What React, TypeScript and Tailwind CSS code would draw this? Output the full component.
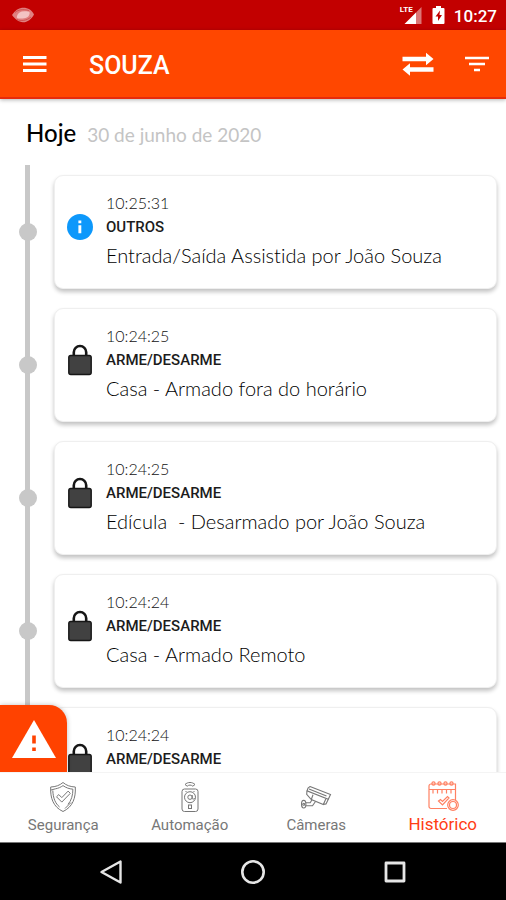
type EventItem = {
  time: string;
  category: string;
  message?: string;
  kind: "info" | "lock";
};

const events: EventItem[] = [
  { time: "10:25:31", category: "OUTROS", message: "Entrada/Saída Assistida por João Souza", kind: "info" },
  { time: "10:24:25", category: "ARME/DESARME", message: "Casa - Armado fora do horário", kind: "lock" },
  { time: "10:24:25", category: "ARME/DESARME", message: "Edícula  - Desarmado por João Souza", kind: "lock" },
  { time: "10:24:24", category: "ARME/DESARME", message: "Casa - Armado Remoto", kind: "lock" },
  { time: "10:24:24", category: "ARME/DESARME", kind: "lock" },
];

const InfoIcon = () => (
  <svg viewBox="0 0 26 26" className="size-[26px]" aria-hidden="true">
    <circle cx="13" cy="13" r="13" fill="#0d98fb" />
    <path d="M11.4 6.6h2.900v2.700h-2.900zM11.4 11.200h2.900v8h-2.900z" fill="#fff" />
  </svg>
);

const LockIcon = () => (
  <svg viewBox="0 0 26 32" className="h-8 w-[26px]" aria-hidden="true">
    <path d="M6.8 12V8.2a6.2 6.2 0 0 1 12.4 0V12" fill="none" stroke="#161616" strokeWidth="2.6" />
    <rect x="1.8" y="11.5" width="22.4" height="19" rx="2" fill="#414141" stroke="#161616" strokeWidth="1.4" />
  </svg>
);

const ShieldIcon = () => (
  <svg viewBox="0 0 28 32" className="h-8 w-7" fill="none" stroke="currentColor" strokeWidth="1" aria-hidden="true">
    <path d="M14 1.500c3.500 3 7.500 4.300 12.300 4.500.6 11-2.600 20-12.300 24.500C4.300 26 1.100 17 1.700 6 6.500 5.800 10.500 4.500 14 1.500z" />
    <path d="M3.800 9.500c.3 7.500 2.500 13 6.800 16.500M2 9l4.500-1.200c2.800-.5 5.300-1.600 7.500-3.200 2.900 2.100 6.200 3.300 9.900 3.600 0 6-1.600 11.500-4.900 15.200M16 27.500l6-6" />
    <path d="M7.500 15.800l2.300-2.200 3 3 6.300-6.500 2.200 2.200-8.500 8.800z" />
  </svg>
);

const RemoteIcon = () => (
  <svg viewBox="0 0 20 32" className="h-8 w-5" fill="none" stroke="currentColor" strokeWidth="1" aria-hidden="true">
    <path d="M5 3.500C7.800.8 12.200.8 15 3.500M5 3.500l2.200 1.700c1.700-1.500 3.900-1.500 5.600 0L15 3.500" />
    <rect x="2" y="8" width="16" height="22.500" rx="2.500" />
    <circle cx="10" cy="16.200" r="5.500" />
    <circle cx="10" cy="16.200" r="2.200" />
    <path d="M12.200 14v3.500c.8 1 2 .6 2.600-.5M5.500 10.500h1M13.500 10.500h1" />
    <rect x="8.500" y="24" width="3" height="3.500" />
  </svg>
);

const CameraIcon = () => (
  <svg viewBox="0 0 32 32" className="size-8" fill="none" stroke="currentColor" strokeWidth="1.1" aria-hidden="true">
    <path d="M10 5.500l20.500 8-2.200 4.700L7 9.800c.3-2 1.200-3.600 3-4.300z" />
    <path d="M7 9.800l-.3 3.500 4.600 5.200 12 5 2.500-5.500M23.300 23.500l2.700-.6 2.300-4.700M9 8l17.500 7M11.300 18.500l1.700-4.700" />
    <path d="M15.500 20.500l-3 4.200H5.500M12 18.800l-1.800 3H5.500" />
    <ellipse cx="3.700" cy="23.200" rx="2.200" ry="3.800" />
    <circle cx="3.700" cy="23.200" r="1" />
  </svg>
);

const CalendarIcon = () => (
  <svg viewBox="0 0 32 32" className="size-8 text-[#ff8163]" fill="none" stroke="currentColor" strokeWidth="1.200" aria-hidden="true">
    <path d="M20 28.500H4a2 2 0 0 1-2-2V6a2 2 0 0 1 2-2h24.500v16M2 9.500h26.500" />
    <circle cx="6.500" cy="3.500" r="1.600" />
    <circle cx="12.500" cy="3.500" r="1.600" />
    <circle cx="18.500" cy="3.500" r="1.600" />
    <circle cx="24.500" cy="3.500" r="1.600" />
    <path d="M6 10v3.500M10.500 10v3.500M15 10v3.500M19.500 10v3.500M24 10v3.500" />
    <path d="M11.500 21l2-1.500 2 2 5-5 1.500 1.500-6.500 7z" />
    <circle cx="26" cy="25" r="5.300" />
    <circle cx="26" cy="25" r="3.500" />
  </svg>
);

const tabs = [
  { label: "Segurança", Icon: ShieldIcon, active: false },
  { label: "Automação", Icon: RemoteIcon, active: false },
  { label: "Câmeras", Icon: CameraIcon, active: false },
  { label: "Histórico", Icon: CalendarIcon, active: true },
];

const StatusBar = () => (
  <div className="flex h-[30px] shrink-0 items-center bg-[#c20000] pr-[9px] pl-3">
    <svg viewBox="0 0 22 16" className="h-4 w-[22px]" aria-hidden="true">
      <path d="M0 8C3 3.500 6.500 1 10 .7 15.500.2 20 3 22 7.500 19.500 12.500 15 15.500 11 15.300 6.500 15 3 12 0 8z" fill="#e08080" />
      <path d="M5 9c1-4 5-5.500 11-4.500 1.500 0 2 1 1.500 2.500-1 4-5 5-11 4.500C5 11.500 4.500 10.500 5 9z" fill="#f3c4c4" />
      <path d="M3 5.500C6 2.800 11 1.800 17 3.500M5 12.500c4 1.800 9 1.500 14-2.500" fill="none" stroke="#c94040" strokeWidth=".7" />
    </svg>
    <div className="ml-auto flex items-center">
      <div className="relative">
        <svg viewBox="0 0 22 20" className="h-5 w-[22px]" aria-hidden="true">
          <path d="M21.500 2v17H16V7.500z" fill="#dc7676" />
          <path d="M16 7.500V19H4.500z" fill="#fff" />
        </svg>
        <span className="absolute top-px left-0 text-[8px] leading-[8px] font-bold text-white">LTE</span>
      </div>
      <svg viewBox="0 0 14 20" className="ml-[10px] h-5 w-[14px]" aria-hidden="true">
        <path d="M4 1h5v2h2.500q1 0 1 1v14q0 1-1 1h-10q-1 0-1-1V4q0-1 1-1H4z" fill="#fff" />
        <path d="M8 5.500L3.500 11.500H6v4.500l4-6H7.500z" fill="#c20000" />
      </svg>
      <span className="ml-2 pt-px text-[17px] leading-6 font-medium text-white">10:27</span>
    </div>
  </div>
);

const AppBar = () => (
  <header className="z-10 flex h-[69px] shrink-0 items-center border-b-2 border-[#e62b0c] bg-[#ff4700] pr-4 pl-[22px] text-white shadow-[0_1px_4px_rgba(0,0,0,0.3)]">
    <button type="button" aria-label="Menu">
      <svg viewBox="0 0 26 20" className="h-5 w-[26px]" aria-hidden="true">
        <path d="M1 3.500h23.500M1 10h23.500M1 16.500h23.500" stroke="currentColor" strokeWidth="2.800" />
      </svg>
    </button>
    <h1 className="ml-[41px] pt-1 text-[25px] leading-8 font-medium">SOUZA</h1>
    <button type="button" aria-label="Alternar" className="ml-auto">
      <svg viewBox="0 0 32 24" className="h-6 w-8" fill="currentColor" aria-hidden="true">
        <path d="M.5 4.800H24V.8l7.500 6.200-7.500 6.200v-4H.5zM31.500 15.300H8v-4L.5 17.500 8 23.700v-4h23.500z" />
      </svg>
    </button>
    <button type="button" aria-label="Filtrar" className="ml-[30px]">
      <svg viewBox="0 0 26 20" className="h-5 w-[26px]" aria-hidden="true">
        <path d="M1 4h24M5 10h16M10 16h6" stroke="currentColor" strokeWidth="2.600" />
      </svg>
    </button>
  </header>
);

const EventCard = ({ time, category, message, kind }: EventItem) => (
  <article className="flex flex-1 gap-[13px] rounded-[9px] border border-[#efefef] bg-white py-[15px] pl-3 shadow-[0_3px_4px_rgba(0,0,0,0.24)]">
    <div className="flex h-[72px] w-[26px] items-center justify-center">
      {kind === "info" ? <InfoIcon /> : <LockIcon />}
    </div>
    <div className="min-h-[82px] min-w-0 font-[Lato,sans-serif]">
      <time className="block text-[16px] leading-6 font-light text-[#111]">{time}</time>
      <h3 className="font-[Roboto,sans-serif] text-[15px] leading-6 font-medium text-[#1c1c1c]">{category}</h3>
      {message && (
        <p className="text-[20px] leading-8 font-light whitespace-pre text-black [font-variant-ligatures:none]">
          {message}
        </p>
      )}
    </div>
  </article>
);

export default function App() {
  return (
    <div className="flex h-dvh flex-col bg-white font-[Roboto,sans-serif]">
      <StatusBar />
      <AppBar />

      <div className="relative flex min-h-0 flex-1 flex-col">
        <main className="min-h-0 flex-1 overflow-hidden">
          <h2 className="flex h-[66px] items-baseline gap-[11px] pt-[18px] pl-[26px] font-[Lato,sans-serif]">
            <span className="text-[24px] leading-8 font-medium text-black">Hoje</span>
            <span className="text-[19px] leading-8 text-[#c4c4c4]">30 de junho de 2020</span>
          </h2>

          <ol className="relative flex flex-col gap-[19px] pt-[10px] pr-[9px] pl-[19px]">
            <li aria-hidden="true" className="absolute inset-y-0 left-[25px] w-[5px] bg-[#c8c8c8]" />
            {events.map((event, index) => (
              <li key={index} className="flex items-center gap-[17px]">
                <span className="z-0 size-[18px] shrink-0 rounded-full bg-[#c8c8c8]" />
                <EventCard {...event} />
              </li>
            ))}
          </ol>
        </main>

        {/* Alert button sits over the list */}
        <button
          type="button"
          aria-label="Alerta"
          className="absolute bottom-0 left-0 flex size-[67px] items-center justify-center rounded-tr-[18px] bg-[#ff4200] shadow-[0_0_5px_rgba(0,0,0,0.25)]"
        >
          <svg viewBox="0 0 44 40" className="h-10 w-11" aria-hidden="true">
            <path d="M22 1l22 38H0z" fill="#fff" />
            <path d="M20.200 16.500h3.600v8h-3.600zM20.200 28.500h3.600v3.600h-3.600z" fill="#ff4200" />
          </svg>
        </button>
      </div>

      <nav className="z-10 grid h-[70px] shrink-0 grid-cols-4 border-t border-[#f4f4f4] bg-white">
        {tabs.map(({ label, Icon, active }) => (
          <a
            key={label}
            href="#"
            aria-current={active ? "page" : undefined}
            className={
              active
                ? "flex flex-col items-center pt-[7px] text-[#ff3d14]"
                : "flex flex-col items-center pt-[8px] text-[#777]"
            }
          >
            <Icon />
            <span className={active ? "text-[17px] leading-6" : "text-[15px] leading-6"}>{label}</span>
          </a>
        ))}
      </nav>

      <div className="flex h-[58px] shrink-0 items-center justify-center border-t border-[#777] bg-black text-[#e6e6e6]">
        <button type="button" aria-label="Voltar" className="flex w-[142px] justify-center">
          <svg viewBox="0 0 26 26" className="size-[26px]" fill="none" stroke="currentColor" strokeWidth="2.400" strokeLinejoin="round" aria-hidden="true">
            <path d="M22.500 2.500v21L3.500 13z" />
          </svg>
        </button>
        <button type="button" aria-label="Início" className="flex w-[142px] justify-center">
          <svg viewBox="0 0 26 26" className="size-[26px]" fill="none" stroke="currentColor" strokeWidth="2.600" aria-hidden="true">
            <circle cx="13" cy="13" r="10.700" />
          </svg>
        </button>
        <button type="button" aria-label="Recentes" className="flex w-[142px] justify-center">
          <svg viewBox="0 0 26 26" className="size-[26px]" fill="none" stroke="currentColor" strokeWidth="2.800" strokeLinejoin="round" aria-hidden="true">
            <rect x="4" y="4" width="18" height="18" />
          </svg>
        </button>
      </div>
    </div>
  );
}
